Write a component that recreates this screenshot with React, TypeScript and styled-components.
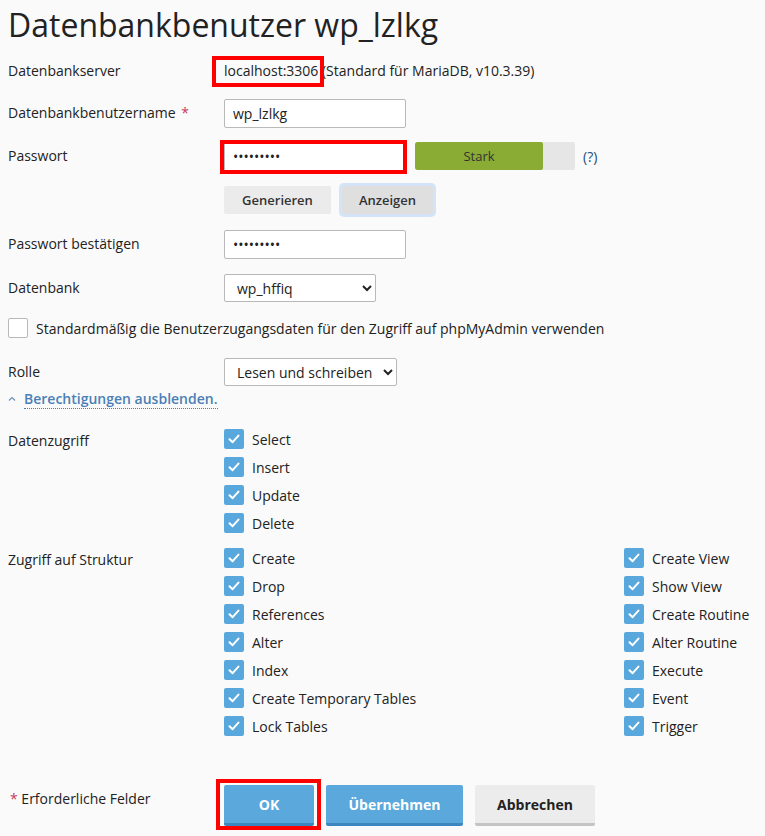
import React from "react";
import styled, { createGlobalStyle } from "styled-components";

const GlobalStyle = createGlobalStyle`
  html, body { margin: 0; padding: 0; background: #fafafa; }
  body {
    font-family: "Open Sans", "Noto Sans", sans-serif;
    font-size: 14px;
    color: #222;
  }
  * { box-sizing: border-box; }
`;

const Page = styled.div`
  width: 765px;
  padding: 0 8px 12px;
`;

const Title = styled.h1`
  margin: 0;
  height: 50px;
  font-size: 32px;
  line-height: 50px;
  font-weight: 400;
  color: #222;
  white-space: nowrap;
`;

const Row = styled.div<{ $h: number; $mt?: number }>`
  display: grid;
  grid-template-columns: 216px 1fr;
  align-items: center;
  height: ${(p) => p.$h}px;
  margin-top: ${(p) => p.$mt ?? 0}px;
`;

const Label = styled.div`
  line-height: 20px;
  color: #222;
`;

const Req = styled.span`
  color: #c7395f;
  margin-left: 2px;
`;

const Control = styled.div`
  display: flex;
  align-items: center;
`;

const Marked = styled.span<{ $t: number; $r: number; $b: number; $l: number }>`
  position: relative;
  display: inline-flex;
  &::after {
    content: "";
    position: absolute;
    top: ${(p) => p.$t}px;
    right: ${(p) => p.$r}px;
    bottom: ${(p) => p.$b}px;
    left: ${(p) => p.$l}px;
    border: 4px solid #ff0000;
    pointer-events: none;
  }
`;

const ServerText = styled.span`
  line-height: 20px;
`;

const TextInput = styled.input`
  width: 182px;
  height: 29px;
  padding: 0 8px;
  border: 1px solid #b9b9b9;
  border-radius: 2px;
  background: #fff;
  font-family: "Open Sans", sans-serif;
  font-size: 14px;
  color: #222;
  outline: none;
`;

const Meter = styled.div`
  width: 160px;
  height: 28px;
  margin-left: 9px;
  border-radius: 2px;
  background: #e6e6e6;
  display: flex;
  overflow: hidden;
`;

const MeterFill = styled.div`
  background: #8aac35;
  height: 100%;
  display: flex;
  align-items: center;
  justify-content: center;
  font-size: 13px;
  color: #333;
  border-radius: 2px;
`;

const Help = styled.span`
  margin-left: 8px;
  color: #264d78;
  font-size: 14px;
`;

const SmallButton = styled.button<{ $active?: boolean; $w: number }>`
  width: ${(p) => p.$w}px;
  height: 28px;
  padding: 0;
  border: none;
  border-radius: 2px;
  background: ${(p) => (p.$active ? "#dfdfdf" : "#ebebeb")};
  box-shadow: ${(p) => (p.$active ? "0 0 0 3px #d3e4f8" : "none")};
  font-family: "Open Sans", sans-serif;
  font-size: 13px;
  font-weight: 600;
  color: #333;
  & + & {
    margin-left: 11px;
  }
`;

const Select = styled.select<{ $w: number }>`
  width: ${(p) => p.$w}px;
  height: 28px;
  padding: 0 4px 0 8px;
  border: 1px solid #b9b9b9;
  border-radius: 2px;
  background: #fff;
  font-family: "Open Sans", sans-serif;
  font-size: 14px;
  color: #222;
`;

const CheckRow = styled.div`
  display: flex;
  align-items: center;
  gap: 8px;
  height: 36px;
`;

const EmptyBox = styled.span`
  width: 20px;
  height: 20px;
  border: 1px solid #b9b9b9;
  border-radius: 2px;
  background: #fff;
  display: inline-block;
`;

const CheckedBox = styled.span`
  width: 20px;
  height: 20px;
  border-radius: 2px;
  background: #59a8dd;
  display: inline-flex;
  align-items: center;
  justify-content: center;
  flex: none;
`;

const ToggleLink = styled.div`
  display: flex;
  align-items: center;
  height: 26px;
  gap: 8px;
`;

const LinkText = styled.span`
  color: #4a7fb5;
  font-weight: 600;
  border-bottom: 1px dotted #4a7fb5;
  line-height: 19px;
`;

const PermSection = styled.div<{ $mt: number }>`
  display: grid;
  grid-template-columns: 216px 400px 1fr;
  margin-top: ${(p) => p.$mt}px;
`;

const PermLabel = styled.div`
  line-height: 28px;
  padding-top: 2px;
`;

const PermList = styled.div`
  display: flex;
  flex-direction: column;
`;

const PermItem = styled.div`
  display: flex;
  align-items: center;
  gap: 8px;
  height: 28px;
  white-space: nowrap;
`;

const Footer = styled.div`
  display: grid;
  grid-template-columns: 216px 1fr;
  margin-top: 45px;
`;

const FooterNote = styled.div`
  padding-top: 4px;
  line-height: 20px;
`;

const FooterButtons = styled.div`
  display: flex;
  gap: 12px;
`;

const BigButton = styled.button<{ $primary?: boolean; $w: number }>`
  width: ${(p) => p.$w}px;
  height: 41px;
  border: none;
  border-bottom: 3px solid ${(p) => (p.$primary ? "#3d86bf" : "#c4c4c4")};
  border-radius: 2px;
  background: ${(p) => (p.$primary ? "#5aa8dc" : "#ececec")};
  color: ${(p) => (p.$primary ? "#fff" : "#222")};
  font-family: "Open Sans", sans-serif;
  font-size: 14px;
  font-weight: 700;
  padding: 0;
`;

const Check = () => (
  <CheckedBox>
    <svg width="14" height="14" viewBox="0 0 14 14" fill="none">
      <path d="M2.5 7.2 L5.6 10.2 L11.5 3.6" stroke="#fff" strokeWidth="2" strokeLinecap="round" strokeLinejoin="round" />
    </svg>
  </CheckedBox>
);

const Perm = ({ label }: { label: string }) => (
  <PermItem>
    <Check />
    <span>{label}</span>
  </PermItem>
);

const dataAccess = ["Select", "Insert", "Update", "Delete"];
const structA = ["Create", "Drop", "References", "Alter", "Index", "Create Temporary Tables", "Lock Tables"];
const structB = ["Create View", "Show View", "Create Routine", "Alter Routine", "Execute", "Event", "Trigger"];

export default function App() {
  return (
    <Page>
      <GlobalStyle />
      <Title>Datenbankbenutzer wp_lzlkg</Title>

      <Row $h={42}>
        <Label>Datenbankserver</Label>
        <Control>
          <ServerText>
            <Marked $t={-5} $r={-6} $b={-6} $l={-12}>localhost:3306</Marked> (Standard für MariaDB, v10.3.39)
          </ServerText>
        </Control>
      </Row>

      <Row $h={42}>
        <Label>
          Datenbankbenutzername<Req> *</Req>
        </Label>
        <Control>
          <TextInput readOnly value="wp_lzlkg" />
        </Control>
      </Row>

      <Row $h={44}>
        <Label>Passwort</Label>
        <Control>
          <Marked $t={-2} $r={-1} $b={-3} $l={-4}>
            <TextInput type="password" readOnly value="abcdefghi" />
          </Marked>
          <Meter>
            <MeterFill style={{ width: "80%" }}>Stark</MeterFill>
          </Meter>
          <Help>(?)</Help>
        </Control>
      </Row>

      <Row $h={44}>
        <span />
        <Control>
          <SmallButton $w={107}>Generieren</SmallButton>
          <SmallButton $w={91} $active>Anzeigen</SmallButton>
        </Control>
      </Row>

      <Row $h={44}>
        <Label>Passwort bestätigen</Label>
        <Control>
          <TextInput type="password" readOnly value="abcdefghi" />
        </Control>
      </Row>

      <Row $h={44}>
        <Label>Datenbank</Label>
        <Control>
          <Select $w={152} defaultValue="wp_hffiq">
            <option value="wp_hffiq">wp_hffiq</option>
          </Select>
        </Control>
      </Row>

      <CheckRow>
        <EmptyBox />
        <span>Standardmäßig die Benutzerzugangsdaten für den Zugriff auf phpMyAdmin verwenden</span>
      </CheckRow>

      <Row $h={28} $mt={12}>
        <Label>Rolle</Label>
        <Control>
          <Select $w={173} defaultValue="rw">
            <option value="rw">Lesen und schreiben</option>
          </Select>
        </Control>
      </Row>

      <ToggleLink>
        <svg width="8" height="6" viewBox="0 0 8 6" fill="none">
          <path d="M1 4.5 L4 1.5 L7 4.5" stroke="#6a8fb8" strokeWidth="1.2" />
        </svg>
        <LinkText>Berechtigungen ausblenden.</LinkText>
      </ToggleLink>

      <PermSection $mt={13}>
        <PermLabel>Datenzugriff</PermLabel>
        <PermList>
          {dataAccess.map((p) => (
            <Perm key={p} label={p} />
          ))}
        </PermList>
      </PermSection>

      <PermSection $mt={7}>
        <PermLabel>Zugriff auf Struktur</PermLabel>
        <PermList>
          {structA.map((p) => (
            <Perm key={p} label={p} />
          ))}
        </PermList>
        <PermList>
          {structB.map((p) => (
            <Perm key={p} label={p} />
          ))}
        </PermList>
      </PermSection>

      <Footer>
        <FooterNote>
          <Req>*</Req> Erforderliche Felder
        </FooterNote>
        <FooterButtons>
          <Marked $t={-6} $r={-7} $b={-4} $l={-8}>
            <BigButton $primary $w={90}>OK</BigButton>
          </Marked>
          <BigButton $primary $w={137}>Übernehmen</BigButton>
          <BigButton $w={120}>Abbrechen</BigButton>
        </FooterButtons>
      </Footer>
    </Page>
  );
}
